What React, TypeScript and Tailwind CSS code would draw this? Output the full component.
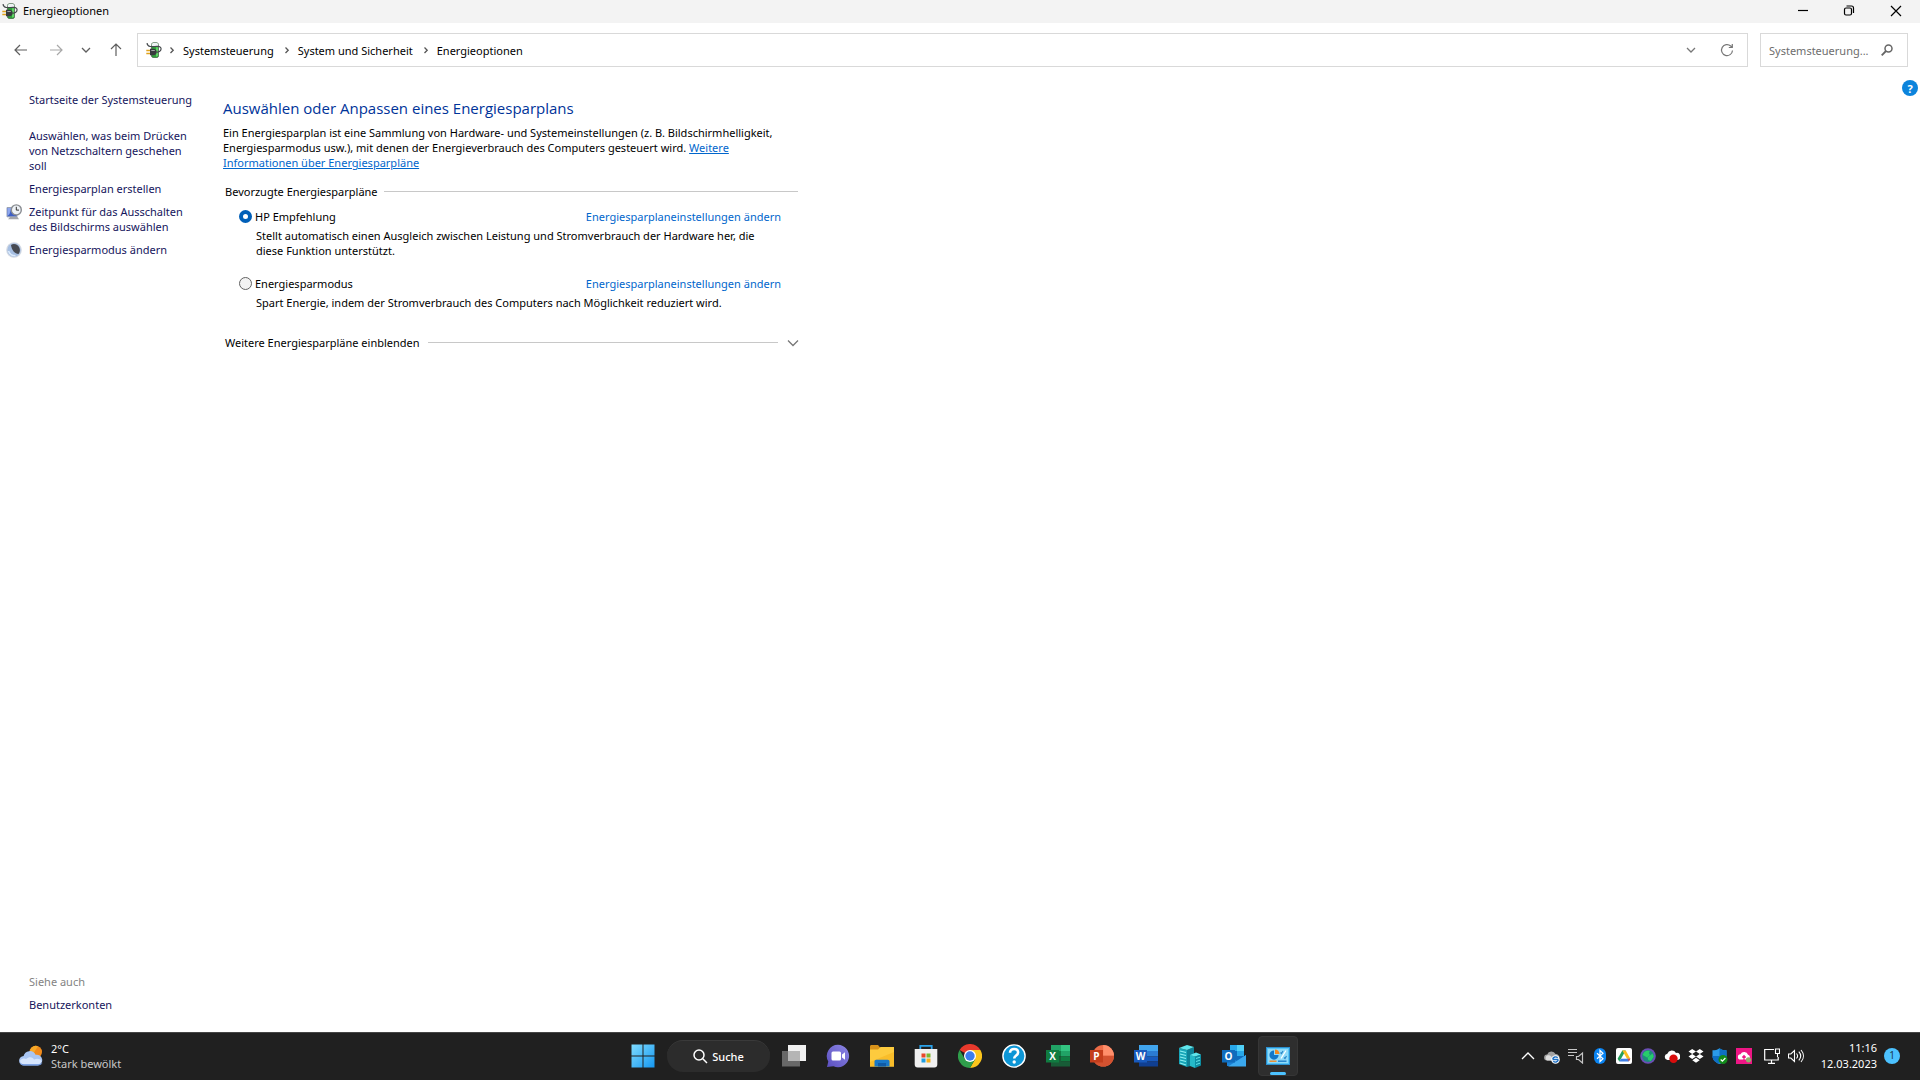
import React, { useState } from "react";

type IconProps = { className?: string };

const BatteryPlug = ({ className = "size-4 shrink-0" }: IconProps) => (
  <svg viewBox="0 0 16 16" className={className} aria-hidden="true">
    <path d="M5.500 2.200C5.500 1 7.500.5 9 .5s3.500.5 3.500 1.700v12c0 1-1.800 1.600-3.500 1.600s-3.500-.6-3.500-1.600z" fill="#2f9e3a" stroke="#3c4a3d" strokeWidth=".6" />
    <path d="M5.800 2.200C6.100 1.200 7.700.8 9 .8s2.900.4 3.200 1.400v2.300c-1 .7-5.400.7-6.400 0z" fill="#eef3f4" />
    <path d="M10 5.200h2v8.800l-2 .7z" fill="#5ed463" />
    <path d="M1 1.200c.3 2 1.300 3 3.200 3.300 3 .4 5.300-.3 7.800-.1 3 .2 3.500 2 2.700 3.900-.7 1.600-2.200 2-4.200 1.700" fill="none" stroke="#45494c" strokeWidth="1.200" />
    <path d="M4 6.800h3.200c2.300 0 3.500 1.500 3.500 3.200S9.500 13.200 7.200 13.200H4z" fill="#383b3e" />
    <path d="M5.300 8h2.400c.8 0 1.200.4 1.400 1H5.300z" fill="#a5aaad" />
    <path d="M.3 8.500H4M.3 11.500H4" stroke="#e0a31e" strokeWidth="1.300" />
  </svg>
);

const Chevron = ({ className = "size-3", d }: IconProps & { d: string }) => (
  <svg viewBox="0 0 12 12" className={className} fill="none" stroke="currentColor" strokeWidth="1.300" aria-hidden="true">
    <path d={d} />
  </svg>
);
const DOWN = "M2 4l4 4 4-4";
const DOWN_WIDE = "M2 3.500l5 5 5-5";
const RIGHT = "M4.500 3.500L7.200 6.200 4.500 9";

const Arrow = ({ className = "size-4", d }: IconProps & { d: string }) => (
  <svg viewBox="0 0 16 16" className={className} fill="none" stroke="currentColor" strokeWidth="1.200" aria-hidden="true">
    <path d={d} />
  </svg>
);

const MonitorClock = () => (
  <svg viewBox="0 0 16 16" className="size-4" aria-hidden="true">
    <path d="M1 3.500h10v9.300H1z" fill="#3e5fc4" stroke="#9aa3b5" />
    <path d="M1.500 4h4l-2 6-2 2z" fill="#8ea7ee" />
    <path d="M2 15.300h11l-1.500-2.300H4z" fill="#a4a6aa" />
    <circle cx="10.300" cy="5.900" r="5" fill="#eef2f6" stroke="#8a8d92" strokeWidth="1.400" />
    <path d="M10.300 2.800v3.300h2.700" fill="none" stroke="#333" />
  </svg>
);

const Moon = () => (
  <svg viewBox="0 0 16 16" className="size-4" aria-hidden="true">
    <circle cx="8" cy="8" r="7.800" fill="#d3d9e3" />
    <circle cx="8" cy="8" r="6.700" fill="#a6bfe3" />
    <path d="M5 3c3-2 7-.5 8.500 3 .8 2.300.3 4.500-1 6C9 12 5.500 8 5 3z" fill="#474a52" />
    <path d="M2.500 9c1 3 4 4.800 7 4.800" fill="none" stroke="#dcebfd" strokeWidth="1.600" />
  </svg>
);

const Weather = () => (
  <svg viewBox="0 0 24 24" className="size-6" aria-hidden="true">
    <circle cx="16.800" cy="8" r="6.200" fill="#f08a1c" />
    <path d="M11 6a6.200 6.200 0 0 1 8-3.800L14 10z" fill="#f7a928" />
    <path d="M5 21.500a4.700 4.700 0 0 1-.4-9.400 6.300 6.300 0 0 1 11.900-1.300A5.400 5.400 0 0 1 19 21.500z" fill="#a9c6f4" />
    <path d="M5 20.300c-3 0-4-2.200-3.900-3.800 2-2.500 5-2 6-1.500 3-3 7-2 8 .5 3-1.500 6.500-.5 7.500 1.500-.5 2-2 3.300-4 3.300z" fill="#d6e5fd" />
    <path d="M5 21.500h14c2 0 4-1.200 4.600-3-1 1.200-2.600 1.800-4.600 1.800H5c-2 0-3.500-.6-4.500-1.700.6 1.700 2.300 2.900 4.500 2.900z" fill="#6f97e0" />
  </svg>
);

const WindowsLogo = () => (
  <svg viewBox="0 0 24 24" className="size-6" aria-hidden="true">
    <defs>
      <linearGradient id="win" x1="0" y1="0" x2="1" y2="1">
        <stop offset="0" stopColor="#7fdcff" />
        <stop offset="1" stopColor="#1597f0" />
      </linearGradient>
    </defs>
    <path d="M.5.500h11v11H.5zM12.500.500h11v11h-11zM.5 12.500h11v11H.5zM12.500 12.500h11v11h-11z" fill="url(#win)" />
  </svg>
);

const TaskView = () => (
  <svg viewBox="0 0 24 24" className="size-6" aria-hidden="true">
    <path d="M6 1h18v16H6z" fill="#f1f1f1" />
    <path d="M0 7h18v15.500H0z" fill="#707070" fillOpacity=".9" />
    <path d="M6 7h12v10H6z" fill="#b5b5b5" />
  </svg>
);

const Chat = () => (
  <svg viewBox="0 0 24 24" className="size-6" aria-hidden="true">
    <defs>
      <linearGradient id="chat" x1="0" y1="1" x2="1" y2="0">
        <stop offset="0" stopColor="#5b4fc0" />
        <stop offset="1" stopColor="#8c86e4" />
      </linearGradient>
    </defs>
    <path d="M12 .8a11.200 11.200 0 1 1-4.500 21.500L1 23l1.300-5.400A11.200 11.200 0 0 1 12 .8z" fill="url(#chat)" />
    <rect x="5.500" y="7.500" width="9.500" height="9" rx="1.500" fill="#fff" />
    <path d="M16 10.500l3-2.300v7.600l-3-2.300z" fill="#fff" />
  </svg>
);

const Explorer = () => (
  <svg viewBox="0 0 24 24" className="size-6" aria-hidden="true">
    <path d="M0 2.500C0 1.500.7 1 1.500 1H8l2.500 3-2 3H0z" fill="#d8921a" />
    <path d="M0 5.500h8L10.500 3H24v19.500H0z" fill="#fdcb3e" />
    <path d="M0 18L24 8v14.500H0z" fill="#f9bd2a" />
    <path d="M4.500 22.500v-5c0-1 .8-1.700 1.700-1.700h11.600c1 0 1.700.8 1.700 1.700v5z" fill="#1878c8" />
    <path d="M8 19h8v3.500H8z" fill="#0f5ba6" />
  </svg>
);

const Store = () => (
  <svg viewBox="0 0 24 24" className="size-6" aria-hidden="true">
    <path d="M6.300 5.500V1.800h11.400v3.700" fill="none" stroke="#2aa2ea" strokeWidth="1.800" />
    <path d="M.7 5h22.600v15.500a3 3 0 0 1-3 3H3.700a3 3 0 0 1-3-3z" fill="#f0f0f0" />
    <path d="M7.500 9.500h4v4h-4z" fill="#e8472b" />
    <path d="M12.500 9.500h4v4h-4z" fill="#7db72f" />
    <path d="M7.500 14.500h4v4h-4z" fill="#1f9de0" />
    <path d="M12.500 14.500h4v4h-4z" fill="#f6b01a" />
  </svg>
);

const Chrome = () => (
  <svg viewBox="0 0 24 24" className="size-6" aria-hidden="true">
    <path d="M12 12L1.600 6A12 12 0 0 1 22.400 6z" fill="#e8392c" />
    <path d="M12 6h10.400a12 12 0 0 1-10.400 18l5.200-9z" fill="#fbc51c" />
    <path d="M6.800 15L1.600 6A12 12 0 0 0 12 24l5.200-9z" fill="#2f9e4b" />
    <circle cx="12" cy="12" r="6" fill="#fff" />
    <circle cx="12" cy="12" r="4.700" fill="#3b7ded" />
  </svg>
);

const HelpApp = () => (
  <svg viewBox="0 0 24 24" className="size-6" aria-hidden="true">
    <circle cx="12" cy="12" r="11.100" fill="#0d96d6" stroke="#fff" strokeWidth="1.400" />
    <path d="M8 8.800C8 6.500 9.700 5 12.100 5c2.300 0 4 1.400 4 3.500 0 3-3.900 3-3.900 6" fill="none" stroke="#fff" strokeWidth="2.600" />
    <circle cx="12.200" cy="18" r="1.700" fill="#fff" />
  </svg>
);

const Letter = ({ fill, children }: { fill: string; children: string }) => (
  <>
    <path d="M0 6h13v12.500H0z" fill={fill} />
    <text x="6.500" y="16" textAnchor="middle" fontSize="10" fontWeight="700" fill="#fff" fontFamily="Open Sans, sans-serif">
      {children}
    </text>
  </>
);

const Excel = () => (
  <svg viewBox="0 0 24 24" className="size-6" aria-hidden="true">
    <path d="M5 1h10v6H5z" fill="#21a366" />
    <path d="M15 1h9v6h-9z" fill="#33c481" />
    <path d="M5 7h10v5.500H5z" fill="#107c41" />
    <path d="M15 7h9v5.500h-9z" fill="#21a366" />
    <path d="M5 12.500h10V22.500H5z" fill="#185c37" />
    <path d="M15 12.500h9v5h-9z" fill="#107c41" />
    <path d="M15 17.500h9v5h-9z" fill="#185c37" />
    <Letter fill="#107c41">X</Letter>
  </svg>
);

const PowerPoint = () => (
  <svg viewBox="0 0 24 24" className="size-6" aria-hidden="true">
    <circle cx="13.200" cy="11.800" r="10.800" fill="#ed6c47" />
    <path d="M13.200 1A10.800 10.800 0 0 1 24 11.800H13.200z" fill="#ff8f6b" />
    <path d="M2.400 11.800H24a10.800 10.800 0 0 1-21.600 0z" fill="#d35230" />
    <Letter fill="#c43e1c">P</Letter>
  </svg>
);

const Word = () => (
  <svg viewBox="0 0 24 24" className="size-6" aria-hidden="true">
    <path d="M5 1h19v6H5z" fill="#41a5ee" />
    <path d="M5 7h19v5.500H5z" fill="#2b7cd3" />
    <path d="M5 12.500h19v5H5z" fill="#185abd" />
    <path d="M5 17.500h19v5H5z" fill="#103f91" />
    <Letter fill="#185abd">W</Letter>
  </svg>
);

const Buildings = () => (
  <svg viewBox="0 0 24 24" className="size-6" aria-hidden="true">
    <path d="M1 4l8 2v17l-8-3z" fill="#17a5b8" />
    <path d="M9 6l7-3v18l-7 2z" fill="#0d8196" />
    <path d="M1 4l8-3 7 2-7 3z" fill="#5fe6ec" />
    <path d="M2 7l6 1.500M2 10l6 1.500M2 13l6 1.500M2 16l6 1.500M2 19l6 2" stroke="#8df0f2" strokeWidth="1.200" />
    <path d="M12 11l5 1.500V24l-5-2z" fill="#25b9c8" />
    <path d="M17 12.500l6-2v11L17 24z" fill="#0d8ea3" />
    <path d="M12 11l6-2.500 5 2-6 2z" fill="#5fe6ec" />
    <path d="M18 14.500l4-1.300M18 17.500l4-1.300M18 20.500l4-1.300" stroke="#62e2e8" />
  </svg>
);

const Outlook = () => (
  <svg viewBox="0 0 24 24" className="size-6" aria-hidden="true">
    <path d="M8 1h14v16H8z" fill="#0f6cbd" />
    <path d="M8 1h7v6H8zM15 7h7v5h-7z" fill="#28a8ea" />
    <path d="M15 1h7v6h-7z" fill="#50d0f7" />
    <path d="M5 11l10 6 9-6v11H5z" fill="#1a80d4" />
    <path d="M24 11L6 22.500h18z" fill="#3aa8ee" />
    <Letter fill="#0f6cbd">O</Letter>
  </svg>
);

const ControlPanel = () => (
  <svg viewBox="0 0 24 24" className="size-6" aria-hidden="true">
    <rect x=".5" y="3.500" width="23" height="17" fill="#57c5f5" stroke="#2b8fd0" />
    <path d="M2 5h20v14H2z" fill="#8fdaf9" />
    <path d="M8 6.500a4.600 4.600 0 1 0 4.600 4.600H8z" fill="#1377c9" />
    <path d="M9 5.500v4.500h4.600A4.600 4.600 0 0 0 9 5.500z" fill="#f08a24" />
    <path d="M15 14.500l5-8" stroke="#fff" strokeWidth="1.200" />
    <path d="M14.500 8.500l1 1 1.500-2.500M18 13.500l1 1 1.500-2.500" fill="none" stroke="#2d86c8" strokeWidth="1.200" />
    <path d="M3.500 17.200h7" stroke="#f08a24" strokeWidth="1.400" />
    <path d="M12 17.200h8.500" stroke="#1f7fc8" strokeWidth="1.400" />
  </svg>
);

const Tray = ({ children }: { children: React.ReactNode }) => (
  <svg viewBox="0 0 16 16" className="size-4" fill="none" aria-hidden="true">
    {children}
  </svg>
);

const trayIcons: { label: string; icon: React.ReactNode }[] = [
  { label: "Ausgeblendete Symbole einblenden", icon: <Tray><path d="M2 11l6-6 6 6" stroke="#fff" strokeWidth="1.300" /></Tray> },
  { label: "OneDrive", icon: <Tray><path d="M3 12.500a3 3 0 0 1 .2-6A4.500 4.500 0 0 1 11.500 6c2.500 0 4 2 4 3.500l-3 3z" fill="#a2a2a2" /><path d="M3 12.500a3 3 0 0 1 0-5c3-1 5 1 7 5z" fill="#dedede" /><circle cx="11.500" cy="11.500" r="4.300" fill="#fff" /><path d="M8.700 11a3 3 0 0 1 5-1.200M14.300 12a3 3 0 0 1-5 1.200M8.500 11.500h6" stroke="#1c6fc4" strokeWidth="1.400" /></Tray> },
  { label: "Medien", icon: <Tray><path d="M0 1.500h9M0 4.500h9M0 7.500h6" stroke="#c6c6c6" strokeWidth="1.200" /><path d="M8.500 8.500h2l4-3.500v10l-4-3.500h-2z" stroke="#c6c6c6" strokeWidth="1.200" /></Tray> },
  { label: "Bluetooth", icon: <Tray><rect x="2" width="12" height="16" rx="6" fill="#0a84f2" /><path d="M5 5.300l6 5.400-3 2.800V2.500l3 2.800-6 5.400" stroke="#fff" strokeWidth="1.200" /></Tray> },
  { label: "Google Drive", icon: <Tray><rect width="16" height="16" rx="2" fill="#fff" /><path d="M6.300 2.500h3.400L5 10.700l-1.700 2.800L1.600 10.700z" fill="#24a05a" /><path d="M6.300 2.500h3.400l4.700 8.200H11z" fill="#fbbc1c" /><path d="M5 10.700h9.400l-1.700 2.800H3.300z" fill="#3f7fe8" /><path d="M11.600 10.700h2.800l-1.500 2.600z" fill="#e8432f" /></Tray> },
  { label: "Netzwerk", icon: <Tray><circle cx="8" cy="8" r="7.800" fill="#6b4fb5" /><circle cx="8" cy="8" r="5.900" fill="#1d8c7c" /><path d="M2.800 7c.8-3.500 4-5 7-4l-1 2L10 7 7 9.500zM7.500 9.500l5-4 1.300 3-3 4.500-2.500-1z" fill="#27cc6a" /></Tray> },
  { label: "Cloud", icon: <Tray><path d="M3.500 12a3.200 3.200 0 0 1-.2-6.300A4.800 4.800 0 0 1 12 5a3.500 3.500 0 0 1 1.500 7z" fill="#fff" /><circle cx="9.500" cy="10.700" r="4.200" fill="#d90d0d" /></Tray> },
  { label: "Dropbox", icon: <Tray><path d="M4.200 1L8 3.500 4.200 6 .5 3.500zM11.800 1l3.700 2.500L11.800 6 8 3.500zM4.200 6L8 8.500 4.200 11 .5 8.500zM11.800 6l3.700 2.500-3.700 2.500L8 8.500zM8 9.800l3.700 2.500L8 14.800l-3.700-2.500z" fill="#fff" /></Tray> },
  { label: "Windows-Sicherheit", icon: <Tray><path d="M7.500.3C9.500 2 12 2.300 14.500 2.300V8c0 4-3 6.500-7 8-4-1.500-7-4-7-8V2.300C3 2.300 5.500 2 7.500.3z" fill="#2a9be8" /><path d="M7.500.3C9.500 2 12 2.300 14.500 2.300V8h-7zM.5 8h7v8c-4-1.500-7-4-7-8z" fill="#0e6fc4" /><circle cx="11" cy="11.500" r="4.500" fill="#138a1b" /><path d="M8.700 11.500l1.700 1.700 3-3.200" stroke="#fff" strokeWidth="1.200" /></Tray> },
  { label: "MagentaCLOUD", icon: <Tray><path d="M0 0h16v16H0z" fill="#ee1685" /><path d="M4.500 11.500a2.600 2.600 0 0 1 0-5.200 4 4 0 0 1 7.500.5 2.500 2.500 0 0 1 .5 4.700z" fill="#fff" /><path d="M8 12V8M6.300 9.500L8 7.700l1.700 1.800" stroke="#ee1685" strokeWidth="1.200" /><circle cx="12.500" cy="11.800" r="2.600" fill="#8fb36d" /></Tray> },
];

const tasks: { label: string; icon: React.ReactNode }[] = [
  { label: "Taskansicht", icon: <TaskView /> },
  { label: "Chat", icon: <Chat /> },
  { label: "Explorer", icon: <Explorer /> },
  { label: "Microsoft Store", icon: <Store /> },
  { label: "Google Chrome", icon: <Chrome /> },
  { label: "HP Support", icon: <HelpApp /> },
  { label: "Excel", icon: <Excel /> },
  { label: "PowerPoint", icon: <PowerPoint /> },
  { label: "Word", icon: <Word /> },
  { label: "Server", icon: <Buildings /> },
  { label: "Outlook", icon: <Outlook /> },
];

const plans = [
  { id: "hp", name: "HP Empfehlung", text: "Stellt automatisch einen Ausgleich zwischen Leistung und Stromverbrauch der Hardware her, die diese Funktion unterstützt." },
  { id: "saver", name: "Energiesparmodus", text: "Spart Energie, indem der Stromverbrauch des Computers nach Möglichkeit reduziert wird." },
];

const sideLinks: { text: string; icon?: React.ReactNode }[] = [
  { text: "Auswählen, was beim Drücken von Netzschaltern geschehen soll" },
  { text: "Energiesparplan erstellen" },
  { text: "Zeitpunkt für das Ausschalten des Bildschirms auswählen", icon: <MonitorClock /> },
  { text: "Energiesparmodus ändern", icon: <Moon /> },
];

function TitleBar() {
  return (
    <header className="flex h-[23px] items-center bg-[#f3f3f3] pb-0.5 pl-0.5">
      <BatteryPlug />
      <h1 className="ml-[5px] grow">Energieoptionen</h1>
      <button aria-label="Minimieren" className="flex w-[46px] justify-center">
        <Arrow d="M3 7.500h10" />
      </button>
      <button aria-label="Verkleinern" className="flex w-[46px] justify-center">
        <svg viewBox="0 0 16 16" className="size-4" fill="none" stroke="currentColor" strokeWidth="1.200" aria-hidden="true">
          <rect x="3.500" y="5" width="7" height="7" rx="1.500" />
          <path d="M5.500 3h5a2 2 0 0 1 2 2v5" />
        </svg>
      </button>
      <button aria-label="Schließen" className="flex w-12 justify-center">
        <Arrow d="M3 3l10 10M13 3L3 13" />
      </button>
    </header>
  );
}

function NavBar() {
  return (
    <div className="flex items-center pt-2.5 pr-3">
      <nav aria-label="Verlauf" className="flex w-[137px] items-center pl-[13px] text-[#5f5f5f]">
        <button aria-label="Zurück"><Arrow d="M14 8H2M7 3L2 8l5 5" /></button>
        <button aria-label="Vorwärts" className="ml-[19px] text-[#a8a8a8]"><Arrow d="M2 8h12M9 3l5 5-5 5" /></button>
        <button aria-label="Zuletzt besucht" className="ml-4"><Chevron d={DOWN} /></button>
        <button aria-label="Nach oben" className="ml-4"><Arrow d="M8 14V2M3 7l5-5 5 5" /></button>
      </nav>
      <nav aria-label="Adresse" className="flex h-[34px] grow items-center border border-[#d9d9d9] pl-2">
        <BatteryPlug />
        {["Systemsteuerung", "System und Sicherheit", "Energieoptionen"].map((crumb) => (
          <React.Fragment key={crumb}>
            <Chevron d={RIGHT} className="mx-1 size-3 shrink-0 text-[#555]" />
            <button className="mr-[3px] pl-px">{crumb}</button>
          </React.Fragment>
        ))}
        <span className="grow" />
        <button aria-label="Adressliste" className="mr-[22px] text-[#777]"><Chevron d={DOWN} /></button>
        <button aria-label="Aktualisieren" className="mr-3 text-[#777]">
          <Arrow d="M13.500 8.500a5.500 5.500 0 1 1-1.800-4.500l1.500 1.300M13.300 2v3.500H9.800" />
        </button>
      </nav>
      <label className="ml-3 flex h-[34px] w-[148px] items-center border border-[#d9d9d9] pl-2">
        <input
          type="text"
          aria-label="Systemsteuerung durchsuchen"
          placeholder="Systemsteuerung..."
          className="w-[104px] outline-none placeholder:text-[#6d6d6d]"
        />
        <svg viewBox="0 0 12 12" className="ml-2 size-3" fill="none" stroke="#666" strokeWidth="1.500" aria-hidden="true">
          <circle cx="7.500" cy="4.500" r="3.500" />
          <path d="M5 7L.7 11.300" strokeWidth="1.800" />
        </svg>
      </label>
    </div>
  );
}

function Sidebar() {
  return (
    <aside className="flex w-[223px] shrink-0 flex-col pt-[25px] pb-5 pl-1.5 text-[#15155c]">
      <a href="#start" className="pl-[23px]">Startseite der Systemsteuerung</a>
      <ul className="mt-[21px] flex flex-col gap-2">
        {sideLinks.map((l) => (
          <li key={l.text} className="flex w-[192px]">
            <span className="w-[23px] shrink-0">{l.icon}</span>
            <a href="#aufgabe">{l.text}</a>
          </li>
        ))}
      </ul>
      <div className="mt-auto flex flex-col gap-2 pl-[23px]">
        <h2 className="text-[#838383]">Siehe auch</h2>
        <a href="#konten">Benutzerkonten</a>
      </div>
    </aside>
  );
}

function PowerPlans() {
  const [plan, setPlan] = useState("hp");
  return (
    <main className="w-[575px] pt-[31px]">
      <h2 className="font-['Open_Sans',sans-serif] text-[15px] leading-5 text-[#003399]">Auswählen oder Anpassen eines Energiesparplans</h2>
      <p className="mt-[7px] w-[567px]">
        Ein Energiesparplan ist eine Sammlung von Hardware- und Systemeinstellungen (z. B. Bildschirmhelligkeit, Energiesparmodus usw.), mit denen der Energieverbrauch des Computers gesteuert wird.{" "}
        <a href="#info" className="text-[#0066cc] underline">Weitere Informationen über Energiesparpläne</a>
      </p>
      <fieldset className="mt-3.5 pl-0.5">
        <legend className="flex w-full items-center gap-1.5">
          Bevorzugte Energiesparpläne
          <span className="h-px grow bg-[#c8c8c8]" />
        </legend>
        {plans.map((p) => (
          <div key={p.id} className="mt-2.5 mb-[18px] pr-[17px] pl-3.5">
            <div className="flex items-center">
              <input
                type="radio"
                name="plan"
                id={p.id}
                checked={plan === p.id}
                onChange={() => setPlan(p.id)}
                className="size-[13px] appearance-none rounded-full border border-[#626262] bg-[#f3f3f3] checked:border-4 checked:border-[#005fb8] checked:bg-white"
              />
              <label htmlFor={p.id} className="grow pl-[3px]">{p.name}</label>
              <a href="#einstellungen" className="text-[#0066cc]">Energiesparplaneinstellungen ändern</a>
            </div>
            <p className="mt-1 w-[530px] pl-[17px]">{p.text}</p>
          </div>
        ))}
      </fieldset>
      <button className="mt-[7px] flex w-full items-center gap-2 pl-0.5">
        Weitere Energiesparpläne einblenden
        <span className="h-px grow bg-[#c8c8c8]" />
        <Chevron d={DOWN_WIDE} className="size-3 overflow-visible text-[#777]" />
      </button>
    </main>
  );
}

function Taskbar() {
  return (
    <footer className="grid h-12 grid-cols-[1fr_auto_1fr] items-center border-t border-[#454545] bg-[#202020] pb-0.5 text-white">
      <button className="flex items-center gap-2 pl-[19px] text-left">
        <Weather />
        <span>
          <span className="block">2°C</span>
          <span className="block text-[#c8c8c8]">Stark bewölkt</span>
        </span>
      </button>
      <nav aria-label="Taskleiste" className="flex items-center gap-1">
        <button aria-label="Start" className="flex size-10 items-center justify-center"><WindowsLogo /></button>
        <button className="flex h-8 w-[103px] items-center justify-center gap-1 rounded-full border-t border-[#3a3a3a] bg-[#2c2c2c] font-medium">
          <svg viewBox="0 0 16 16" className="size-4" fill="none" stroke="#fff" strokeWidth="1.500" aria-hidden="true">
            <circle cx="7" cy="7" r="5" />
            <path d="M10.800 10.800L15 15" />
          </svg>
          Suche
        </button>
        {tasks.map((t) => (
          <button key={t.label} aria-label={t.label} className="flex size-10 items-center justify-center">{t.icon}</button>
        ))}
        <button aria-label="Energieoptionen" className="relative flex size-10 items-center justify-center rounded border border-[#363636] bg-[#2e2e2e]">
          <ControlPanel />
          <span className="absolute bottom-0 h-[3px] w-4 rounded-full bg-[#4cc2ff]" />
        </button>
      </nav>
      <div className="flex items-center justify-end pr-5">
        {trayIcons.map((t) => (
          <button key={t.label} aria-label={t.label} className="flex w-6 justify-center">{t.icon}</button>
        ))}
        <button aria-label="Netzwerk und Lautstärke" className="ml-2 flex gap-2">
          <Tray>
            <path d="M10 1.500H.700v10.500h13.500V9M4 15.300h7M7.500 12v3" stroke="#fff" strokeWidth="1.200" />
            <path d="M11.500 1h4v4.500h-4zM13.500 5.500V9" stroke="#fff" strokeWidth="1.100" />
          </Tray>
          <Tray>
            <path d="M.5 6h2.300L6.500 2.500v11L2.800 10H.5zM8.500 5.500c1.300 1.500 1.300 3.500 0 5M10.800 3.700c2.300 2.600 2.300 6 0 8.600M13 2c3.200 3.600 3.200 8.400 0 12" stroke="#fff" strokeWidth="1.100" />
          </Tray>
        </button>
        <button className="ml-[17px] text-right leading-4">
          <span className="block">11:16</span>
          <span className="block">12.03.2023</span>
        </button>
        <button aria-label="Benachrichtigungen" className="ml-[7px] size-4 rounded-full bg-[#4cc2ff] text-[10px] text-[#1b3b50]">1</button>
      </div>
    </footer>
  );
}

export default function App() {
  return (
    <div className="flex min-h-screen flex-col bg-white font-['Noto_Sans',sans-serif] text-[11px] leading-[15px] text-black">
      <TitleBar />
      <NavBar />
      <div className="flex grow">
        <Sidebar />
        <PowerPlans />
        <div className="flex grow items-start justify-end pt-[13px] pr-0.5">
          <button aria-label="Hilfe" className="flex size-4 items-center justify-center rounded-full bg-[#0c84dc] font-bold text-white">?</button>
        </div>
      </div>
      <Taskbar />
    </div>
  );
}
